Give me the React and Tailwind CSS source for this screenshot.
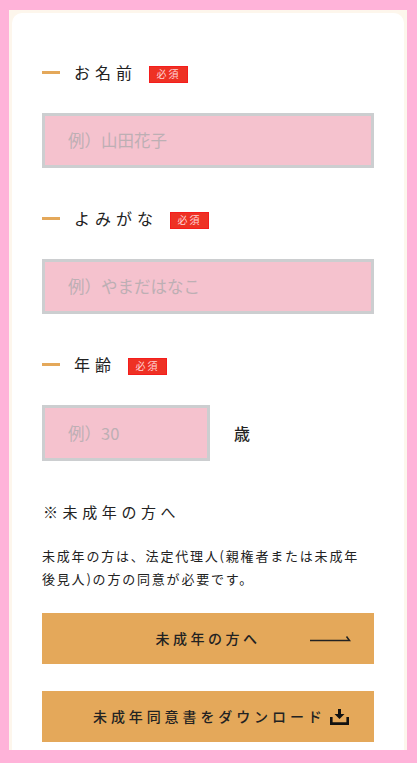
import React from "react";

const jp = "font-['Noto_Sans_CJK_JP','Noto_Sans_CJK_SC',sans-serif]";

function FieldLabel({ children }) {
	return (
		<div className="flex h-5 items-center">
			<span className="h-[3px] w-[18px] bg-[#e4a85a]"></span>
			<span className="ml-[14px] text-[16px] leading-5 font-normal tracking-[5px] text-[#222]">{children}</span>
			<span className="mt-[4px] ml-[12px] flex h-[17px] w-[39px] items-center justify-center border border-[#f51c1c] bg-[#ee3124] text-[10px] leading-none tracking-[0.2em] text-[#ffd5d5]">
				必須
			</span>
		</div>
	);
}

function TextField({ placeholder, className }) {
	return (
		<div className={`flex items-center border-[3px] border-[#ccced0] bg-[#f5c2ce] pl-[23px] text-[16.5px] text-[#bdafb4] ${className}`}>
			{placeholder}
		</div>
	);
}

export default function App() {
	return (
		<div className={`${jp} h-[763px] w-[417px] overflow-hidden bg-[#ffb3d9] pt-[10px] pr-[10px] pb-[13px] pl-[9px]`}>
			<div className="h-full bg-[#fdf6ec] px-[3px] pt-[3px]">
				<div className="h-full overflow-hidden rounded-t-[10px] bg-white px-[30px] pt-[49px]">
					{/* name */}
					<FieldLabel>お名前</FieldLabel>
					<TextField placeholder="例）山田花子" className="mt-[31px] h-[55px]" />

					{/* kana */}
					<div className="mt-[40px]">
						<FieldLabel>よみがな</FieldLabel>
					</div>
					<TextField placeholder="例）やまだはなこ" className="mt-[31px] h-[55px]" />

					{/* age */}
					<div className="mt-[40px]">
						<FieldLabel>年齢</FieldLabel>
					</div>
					<div className="mt-[31px] flex items-center">
						<TextField placeholder="例）30" className="h-[56px] w-[168px]" />
						<span className="ml-[24px] text-[16px] font-medium text-[#222]">歳</span>
					</div>

					{/* minor notice */}
					<h3 className="mt-[41px] pl-[1px] text-[15px] leading-5 font-normal tracking-[4.6px] text-[#222]">※未成年の方へ</h3>
					<p className="mt-[22px] text-[13px] leading-[23px] tracking-[1.8px] whitespace-nowrap text-[#222]">
						未成年の方は、法定代理人(親権者または未成年
						<br />
						後見人)の方の同意が必要です。
					</p>

					<div className="relative mt-[23px] flex h-[51px] items-center justify-center bg-[#e4a85a] text-[14px] font-medium tracking-[3.5px] text-[#222]">
						未成年の方へ
						<svg className="absolute top-[20px] right-[23px]" width="42" height="10" viewBox="0 0 42 10" fill="none" stroke="#222" strokeWidth="1.5">
							<path d="M1 7.5h39.5L37.5 3.5" />
						</svg>
					</div>

					<div className="mt-[27px] flex h-[51px] items-center bg-[#e4a85a] pl-[51px] text-[14px] font-medium tracking-[3.9px] whitespace-nowrap text-[#222]">
						未成年同意書をダウンロード
						<svg className="mt-[1px] ml-[4px]" width="19" height="16" viewBox="0 0 19 16" fill="#111">
							<path d="M8 0h3v5h3.5L9.5 10 4.5 5H8z" />
							<path d="M0 8h2.6v5.2h13.8V8H19v8H0z" />
						</svg>
					</div>
				</div>
			</div>
		</div>
	);
}
